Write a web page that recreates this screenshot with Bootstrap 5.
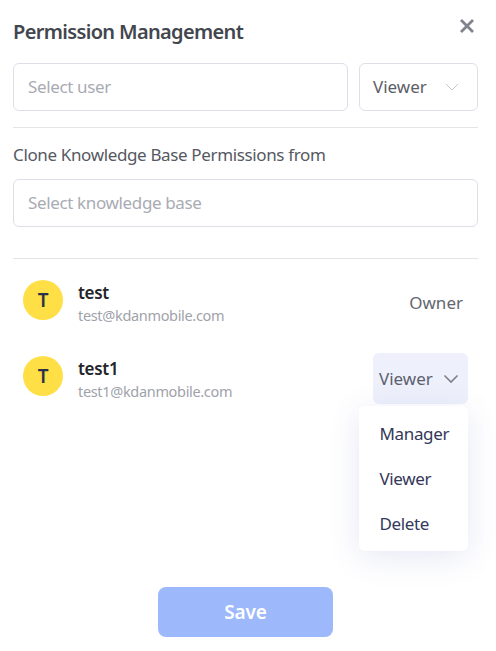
<!DOCTYPE html>
<html lang="en"><head><meta charset="utf-8">
<link href="https://cdn.jsdelivr.net/npm/bootstrap@5.3.0/dist/css/bootstrap.min.css" rel="stylesheet">
<style>
html,body{height:100%;overflow:hidden}
body{font-family:"Noto Sans",sans-serif;background:#fff;color:#4b4f58;font-size:17px;letter-spacing:-.36px}
.pm-wrap{width:465px;margin-left:13px;padding-top:18px;position:relative;height:651px}
.pm-title{font-size:20px;font-weight:600;color:#42464e;line-height:28px;margin:0 0 17px;letter-spacing:-.66px}
.pm-close{position:absolute;right:3px;top:18px;width:16px;height:16px;padding:0;border:0;background:none;display:flex}
.pm-top{gap:11px}
.pm-field{height:48px;border:1px solid #dcdfe8;border-radius:6px;padding:0 14px;color:#a9abb3;display:flex;align-items:center;background:#fff}
.pm-role{width:119px;flex:none;color:#5b5e66;justify-content:space-between;letter-spacing:0;padding-left:13px}
.pm-rule{border-top:1px solid #e3e4e8;opacity:1;margin:16px 0 0}
.pm-rule2{margin:31px 0 13px}
.pm-label{line-height:24px;color:#565962;margin:15px 0 12px}
.pm-person{height:56px;padding-left:10px;padding-right:15px}
.pm-next{margin-top:20px}
.pm-ava{width:40px;height:40px;border-radius:50%;background:#ffdf46;color:#2b3148;font-weight:600;font-size:19px;display:flex;align-items:center;justify-content:center;flex:none;margin-right:15px}
.pm-who{padding-top:7px}
.pm-name{font-size:17px;font-weight:600;color:#23252b;line-height:23px;letter-spacing:-.3px}
.pm-mail{font-size:14.5px;color:#a0a2aa;line-height:23px;letter-spacing:-.33px}
.pm-own{color:#63666e;margin-top:5px;letter-spacing:0}
.pm-ddbtn{width:95px;height:51px;margin:5px -5px 0 0;background:#eef1fb;border:0;border-radius:6px;color:#5b6070;font-size:17px;display:flex;align-items:center;justify-content:space-between;padding:0 9px 0 6px;letter-spacing:0}
.pm-menu{position:absolute;right:28px;top:406px;width:109px;height:145px;background:#fff;border-radius:6px;box-shadow:0 6px 32px rgba(60,80,170,.13);padding:5px 0;margin:0;list-style:none;z-index:5}
.pm-menu li{height:45px;line-height:45px;padding-left:20.5px;color:#34385a}
.pm-save{position:absolute;left:145px;top:587px;width:175px;height:50px;background:#9db8fb;border:0;border-radius:8px;color:#fff;font-size:19px;font-weight:600;letter-spacing:-.2px}
</style></head><body>
<div class="pm-wrap">
<h1 class="pm-title">Permission Management</h1>
<button class="pm-close" type="button" aria-label="Close"><svg width="16" height="16" viewBox="0 0 16 16"><path d="M2 2L14 14M14 2L2 14" stroke="#80838b" stroke-width="2.8" fill="none"/></svg></button>
<div class="d-flex pm-top"><div class="pm-field flex-grow-1">Select user</div>
<div class="pm-field pm-role"><span>Viewer</span><svg width="14" height="8" viewBox="0 0 14 8" class="me-1"><path d="M1 1L7 7L13 1" stroke="#c4c6cc" fill="none"/></svg></div></div>
<hr class="pm-rule">
<div class="pm-label">Clone Knowledge Base Permissions from</div>
<div class="pm-field">Select knowledge base</div>
<hr class="pm-rule pm-rule2">
<div class="d-flex align-items-center pm-person"><div class="pm-ava">T</div><div class="flex-grow-1 pm-who"><div class="pm-name">test</div><div class="pm-mail">test@kdanmobile.com</div></div><div class="pm-own">Owner</div></div>
<div class="d-flex align-items-center pm-person pm-next"><div class="pm-ava">T</div><div class="flex-grow-1 pm-who"><div class="pm-name">test1</div><div class="pm-mail">test1@kdanmobile.com</div></div>
<button class="pm-ddbtn" type="button"><span>Viewer</span><svg width="16" height="10" viewBox="0 0 16 10"><path d="M1.5 1.5L8 8L14.5 1.5" stroke="#7d808a" stroke-width="1.6" fill="none"/></svg></button></div>
<button class="pm-save" type="button">Save</button>
</div>
<ul class="pm-menu"><li>Manager</li><li>Viewer</li><li>Delete</li></ul>
</body></html>
